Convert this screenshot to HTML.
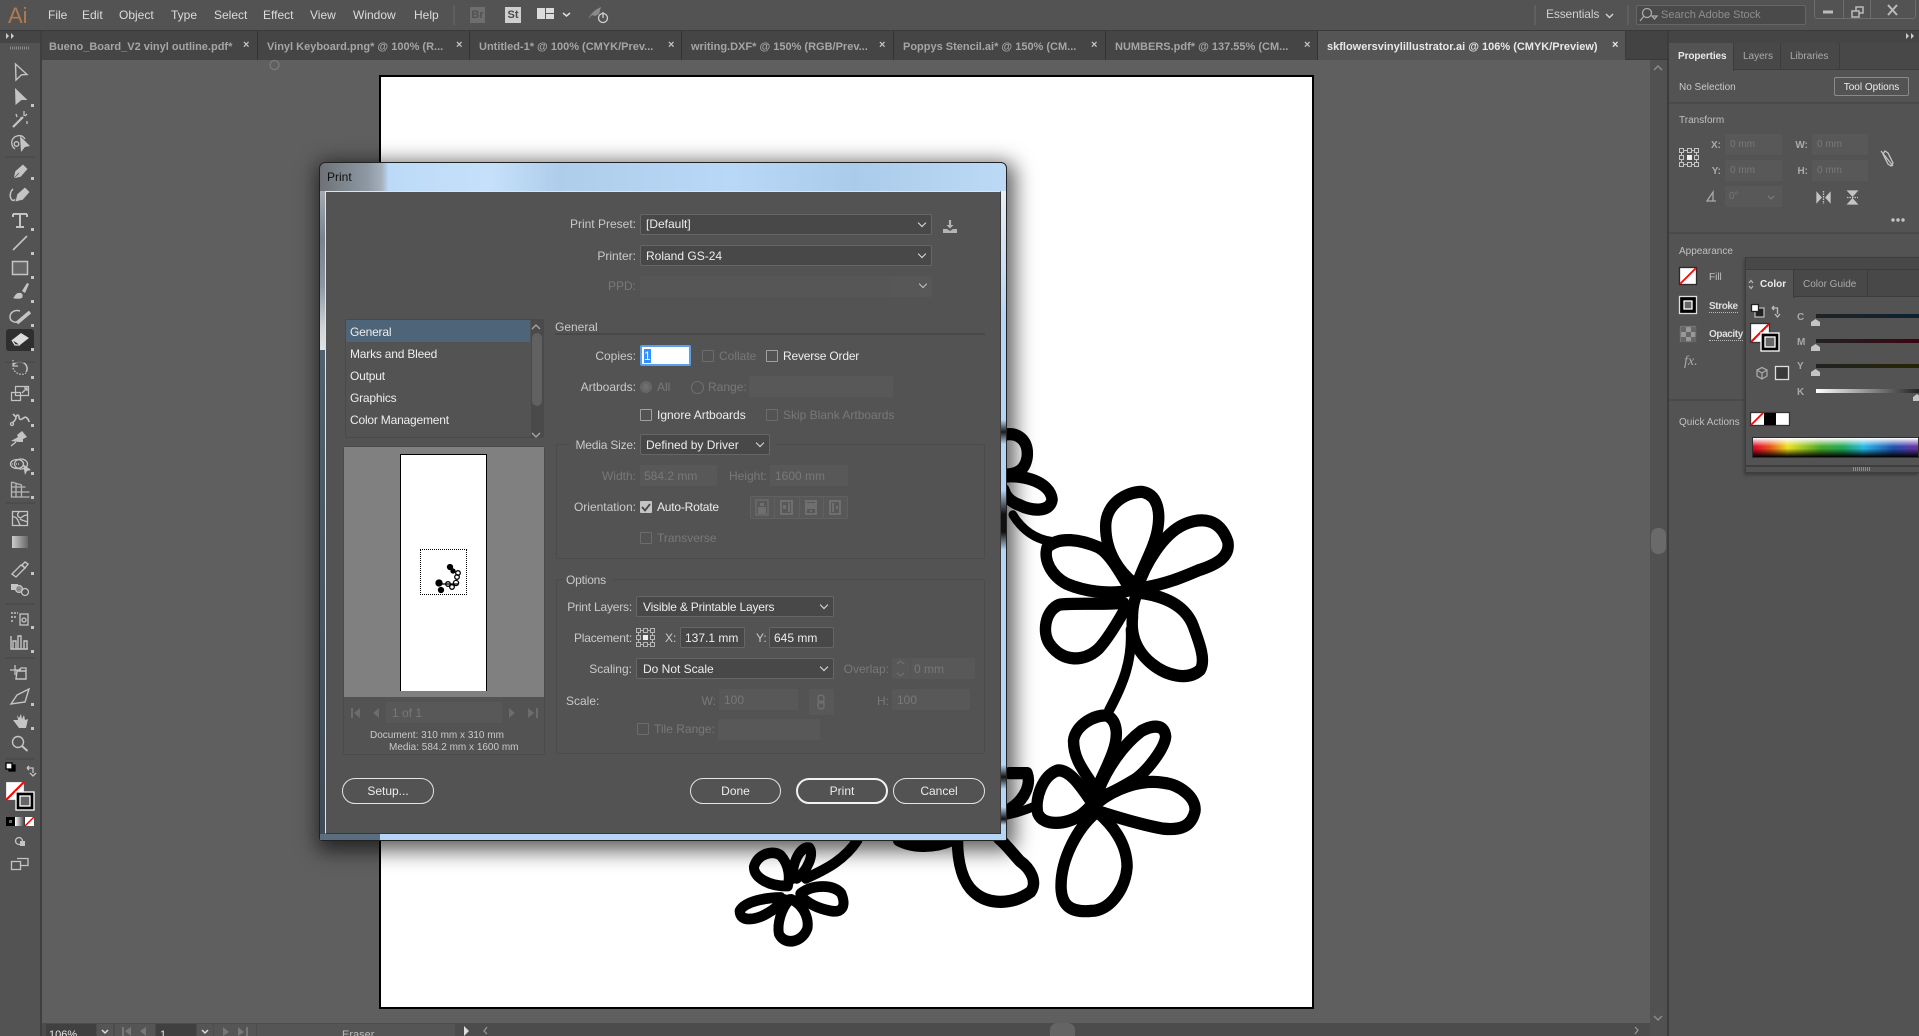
<!DOCTYPE html>
<html><head><meta charset="utf-8"><title>Print</title>
<style>
html,body{margin:0;padding:0;width:1919px;height:1036px;overflow:hidden;background:#5f5f5f}
*{box-sizing:border-box}
body{font:12px/14px "Liberation Sans",sans-serif;color:#c9c9c9;position:relative}
div,span.t,svg{position:absolute}
.t{position:absolute;white-space:nowrap;line-height:14px;font-size:12px}
.r{transform:translateX(-100%)}
.w{color:#ededed}
.d{color:#787878}
.n{letter-spacing:-.2px}
.b{background:#484848;border:1px solid #666;border-radius:2px}
.x{background:#585858;border-radius:1px}
.c{border:1px solid #a0a0a0;border-radius:1px;width:12px;height:12px}
.cd{border:1px solid #6c6c6c;border-radius:1px;width:12px;height:12px}
.chev:after{content:"";position:absolute;right:6px;top:5px;width:5px;height:5px;border-right:1.6px solid #e0e0e0;border-bottom:1.6px solid #e0e0e0;transform:rotate(45deg)}
.btn{position:absolute;border:1px solid #e4e4e4;border-radius:13px;height:26px;color:#ececec;text-align:center;line-height:25px;font-size:12px}
.tab{position:absolute;top:31px;height:29px;background:#454545;border-right:1px solid #333}
.tt{position:absolute;top:39px;white-space:nowrap;font:bold 11px/14px "Liberation Sans",sans-serif;color:#a5a5a5}
.tx{position:absolute;top:38px;font:bold 11px/14px "Liberation Sans",sans-serif;color:#c4c4c4}
.m{position:absolute;top:8px;color:#dcdcdc;font-size:12px;line-height:14px;white-space:nowrap}
.line{background:#454545}
</style></head><body>

<!-- menu bar -->
<div style="left:0;top:0;width:1919px;height:31px;background:#535353;border-bottom:1px solid #3a3a3a"></div>
<span class="t" style="left:8px;top:3px;font-size:22px;line-height:26px;color:#b07a50">Ai</span>
<span class="m" style="left:48px">File</span><span class="m" style="left:82px">Edit</span><span class="m" style="left:119px">Object</span><span class="m" style="left:171px">Type</span><span class="m" style="left:214px">Select</span><span class="m" style="left:263px">Effect</span><span class="m" style="left:310px">View</span><span class="m" style="left:353px">Window</span><span class="m" style="left:414px">Help</span>
<div style="left:453px;top:5px;width:2px;height:20px;background:#5f5f5f"></div>
<div style="left:470px;top:7px;width:15px;height:16px;background:#6e6e6e;color:#525252;font:bold 11px/16px 'Liberation Sans';text-align:center">Br</div>
<div style="left:505px;top:7px;width:16px;height:16px;background:#cfcfcf;color:#4a4a4a;font:bold 11px/16px 'Liberation Sans';text-align:center">St</div>
<div style="left:1534px;top:5px;width:2px;height:20px;background:#5f5f5f"></div>
<span class="t" style="left:1546px;top:7px;color:#d0d0d0;font-size:12px;letter-spacing:-.15px">Essentials</span>
<div style="left:1627px;top:5px;width:2px;height:20px;background:#5f5f5f"></div>
<div style="left:1636px;top:5px;width:170px;height:20px;background:#4a4a4a;border:1px solid #666;border-radius:2px"></div>
<span class="t" style="left:1661px;top:8px;color:#8e8e8e;font-size:11px">Search Adobe Stock</span>
<div style="left:1814px;top:-2px;width:102px;height:21px;border:1px solid #6d6d6d;border-radius:3px"></div>
<div style="left:1843px;top:0;width:1px;height:18px;background:#6d6d6d"></div>
<div style="left:1870px;top:0;width:1px;height:18px;background:#6d6d6d"></div>

<!-- tabs -->
<div style="left:0;top:31px;width:1669px;height:29px;background:#434343;border-bottom:1px solid #393939"></div>
<div class="tab" style="left:42px;width:216px"></div>
<div class="tab" style="left:258px;width:212px"></div>
<div class="tab" style="left:470px;width:212px"></div>
<div class="tab" style="left:682px;width:212px"></div>
<div class="tab" style="left:894px;width:212px"></div>
<div class="tab" style="left:1106px;width:212px"></div>
<div class="tab" style="left:1318px;width:308px;background:#555;border-right:1px solid #3c3c3c"></div>
<span class="tt" style="left:49px;top:40px">Bueno_Board_V2 vinyl outline.pdf*</span><span class="tx" style="left:243px">×</span>
<span class="tt" style="left:267px;top:40px">Vinyl Keyboard.png* @ 100% (R...</span><span class="tx" style="left:456px">×</span>
<span class="tt" style="left:479px;top:40px">Untitled-1* @ 100% (CMYK/Prev...</span><span class="tx" style="left:668px">×</span>
<span class="tt" style="left:691px;top:40px">writing.DXF* @ 150% (RGB/Prev...</span><span class="tx" style="left:879px">×</span>
<span class="tt" style="left:903px;top:40px">Poppys Stencil.ai* @ 150% (CM...</span><span class="tx" style="left:1091px">×</span>
<span class="tt" style="left:1115px;top:40px">NUMBERS.pdf* @ 137.55% (CM...</span><span class="tx" style="left:1304px">×</span>
<span class="tt" style="left:1327px;top:40px;color:#e8e8e8">skflowersvinylillustrator.ai @ 106% (CMYK/Preview)</span><span class="tx" style="left:1612px;color:#e8e8e8">×</span>

<!-- toolbar -->
<div style="left:0;top:31px;width:40px;height:1005px;background:#535353"></div>
<div style="left:40px;top:31px;width:2px;height:1005px;background:#3f3f3f"></div>
<div style="left:0;top:31px;width:40px;height:12px;background:#454545"></div>

<!-- canvas artboard -->
<div style="left:380px;top:76px;width:933px;height:932px;background:#fff;border:1px solid #000;outline:.5px solid #000"></div>

<!-- artwork -->
<svg style="left:0;top:0" width="1919" height="1036" viewBox="0 0 1919 1036">
<g transform="matrix(.3571 0 0 .3827 720 400)" fill="none" stroke="#000" stroke-linejoin="round" stroke-linecap="round">
<g stroke-width="32">
<path d="M1160 480C1120 450 1080 400 1080 330C1080 270 1140 240 1180 240C1225 245 1235 290 1225 340C1215 390 1180 440 1165 490"/>
<path d="M1170 490C1190 430 1240 350 1300 325C1350 305 1400 310 1422 370C1430 410 1390 430 1340 445C1290 465 1250 480 1190 490"/>
<path d="M1150 497C1090 510 1020 500 970 480C930 460 905 420 916 385C950 355 1010 365 1060 385C1090 400 1120 450 1150 497"/>
<path d="M1130 530C1060 535 980 530 950 535C910 550 900 610 925 640C960 685 1020 685 1060 650C1090 620 1120 570 1135 545"/>
<path d="M1170 503C1230 510 1300 530 1325 590C1345 640 1360 680 1345 705C1310 735 1250 720 1210 690C1170 660 1150 620 1155 570C1155 540 1160 520 1170 503"/>
<path d="M1150 600C1155 680 1130 740 1090 810" stroke-width="28"/>
<path d="M820 300C850 345 890 365 930 370" stroke-width="24"/>
<path d="M800 90C840 85 865 110 860 150C855 180 835 195 800 195"/>
<path d="M800 200C850 195 925 215 930 260C925 295 870 290 840 275C810 265 800 250 795 235"/>
<path d="M1050 1015C1020 970 990 940 990 890C995 850 1050 820 1085 825C1115 840 1115 880 1100 920C1085 960 1060 1000 1050 1030"/>
<path d="M1060 1020C1085 960 1130 900 1180 865C1210 850 1245 845 1248 880C1245 910 1200 965 1165 990C1130 1010 1090 1030 1060 1040"/>
<path d="M1060 1050C1100 1020 1170 990 1240 1000C1290 1005 1335 1040 1330 1075C1320 1115 1290 1125 1240 1120C1180 1110 1110 1090 1060 1075"/>
<path d="M1040 1050C1010 1010 980 965 945 968C905 980 880 1040 890 1080C905 1115 970 1110 1010 1085C1030 1070 1040 1060 1045 1050"/>
<path d="M1055 1075C1100 1110 1140 1160 1140 1220C1135 1280 1090 1335 1040 1335C980 1340 955 1320 955 1270C955 1200 1000 1120 1050 1080"/>
<path d="M810 975L860 975C870 1000 860 1040 810 1070"/>
<path d="M800 1085C830 1080 860 1070 885 1060" stroke-width="24"/>
<path d="M665 1150C665 1210 680 1260 710 1285C750 1320 820 1320 870 1285C890 1260 870 1225 840 1205C820 1185 800 1160 780 1145"/>
<path d="M500 1150C540 1170 600 1170 650 1150"/>
</g>
<g stroke-width="28">
<path d="M205 1250C200 1210 225 1165 250 1170C265 1185 245 1230 215 1250"/>
<path d="M185 1270C140 1270 95 1250 95 1220C105 1185 150 1175 170 1190C195 1215 195 1250 190 1270"/>
<path d="M225 1290C260 1265 320 1265 340 1290C355 1325 340 1340 310 1335C280 1330 250 1320 225 1295"/>
<path d="M170 1300C130 1300 70 1310 55 1335C55 1365 100 1360 135 1340C155 1330 170 1315 180 1305"/>
<path d="M195 1305C170 1330 160 1370 165 1395C180 1425 230 1420 245 1380C250 1345 225 1315 200 1305"/>
<path d="M240 1250C300 1225 350 1200 385 1150"/>
</g>
</g>
</svg>

<!-- vertical scrollbar + status -->
<div style="left:1650px;top:60px;width:17px;height:976px;background:#515151"></div>
<div style="left:1651px;top:528px;width:15px;height:26px;background:#6a6a6a;border-radius:7px"></div>
<div style="left:1667px;top:31px;width:2px;height:1005px;background:#3c3c3c"></div>
<div style="left:42px;top:1023px;width:1608px;height:13px;background:#4c4c4c"></div>
<div style="left:1050px;top:1023px;width:25px;height:13px;background:#646464;border-radius:7px 7px 0 0"></div>
<div style="left:46px;top:1024px;width:50px;height:12px;background:#404040"></div>
<div style="left:97px;top:1024px;width:16px;height:12px;background:#555"></div>
<div style="left:115px;top:1024px;width:40px;height:12px;background:#555"></div>
<div style="left:156px;top:1024px;width:40px;height:12px;background:#404040"></div>
<div style="left:197px;top:1024px;width:16px;height:12px;background:#555"></div>
<div style="left:214px;top:1024px;width:42px;height:12px;background:#555"></div>
<div style="left:257px;top:1024px;width:198px;height:12px;background:#555"></div>
<span class="t" style="left:49px;top:1028px;font-size:11px;color:#e4e4e4">106%</span>
<span class="t" style="left:160px;top:1028px;font-size:11px;color:#e4e4e4">1</span>
<span class="t" style="left:342px;top:1028px;font-size:11px;color:#bbb">Eraser</span>

<!-- right panel -->
<div style="left:1669px;top:31px;width:250px;height:1005px;background:#535353"></div>
<div style="left:1669px;top:31px;width:250px;height:12px;background:#454545"></div>
<div style="left:1669px;top:43px;width:250px;height:27px;background:#484848;border-bottom:1px solid #3c3c3c"></div>
<div style="left:1669px;top:43px;width:65px;height:28px;background:#535353;border-right:1px solid #3c3c3c"></div>
<div style="left:1780px;top:43px;width:1px;height:27px;background:#3c3c3c"></div>
<div style="left:1839px;top:43px;width:1px;height:27px;background:#3c3c3c"></div>
<span class="t" style="left:1678px;top:50px;font:bold 10px/14px 'Liberation Sans';color:#eaeaea;letter-spacing:-.1px">Properties</span>
<span class="t" style="left:1743px;top:50px;font-size:10px;color:#aaa">Layers</span>
<span class="t" style="left:1790px;top:50px;font-size:10px;color:#aaa">Libraries</span>
<span class="t" style="left:1679px;top:81px;font-size:10px;color:#c8c8c8">No Selection</span>
<div style="left:1834px;top:77px;width:75px;height:19px;border:1px solid #8b8b8b;border-radius:2px;color:#eee;font-size:10px;line-height:19px;text-align:center">Tool Options</div>
<div class="line" style="left:1669px;top:102px;width:250px;height:2px;background:#4a4a4a"></div>
<span class="t" style="left:1679px;top:114px;font-size:10px;color:#c0c0c0">Transform</span>
<div class="x" style="left:1725px;top:134px;width:57px;height:21px"></div><div class="x" style="left:1725px;top:160px;width:57px;height:21px"></div><div class="x" style="left:1725px;top:186px;width:57px;height:21px"></div>
<div class="x" style="left:1812px;top:134px;width:56px;height:21px"></div><div class="x" style="left:1812px;top:160px;width:56px;height:21px"></div>
<span class="t r" style="left:1721px;top:139px;font-size:10px;font-weight:bold;color:#aaa">X:</span><span class="t r" style="left:1721px;top:165px;font-size:10px;font-weight:bold;color:#aaa">Y:</span>
<span class="t r" style="left:1808px;top:139px;font-size:10px;font-weight:bold;color:#aaa">W:</span><span class="t r" style="left:1808px;top:165px;font-size:10px;font-weight:bold;color:#aaa">H:</span>
<span class="t d" style="left:1730px;top:138px;font-size:10px">0 mm</span><span class="t d" style="left:1730px;top:164px;font-size:10px">0 mm</span>
<span class="t d" style="left:1817px;top:138px;font-size:10px">0 mm</span><span class="t d" style="left:1817px;top:164px;font-size:10px">0 mm</span>
<span class="t d" style="left:1729px;top:190px;font-size:10px">0°</span>
<div style="left:1669px;top:232px;width:250px;height:2px;background:#4a4a4a"></div>
<span class="t" style="left:1679px;top:245px;font-size:10px;color:#c0c0c0">Appearance</span>
<span class="t" style="left:1709px;top:271px;font-size:10px;color:#c0c0c0">Fill</span>
<span class="t" style="left:1709px;top:301px;font-size:10px;color:#dedede;border-bottom:1px dotted #bbb;line-height:11px;font-weight:bold;letter-spacing:-.4px">Stroke</span>
<span class="t" style="left:1709px;top:329px;font-size:10px;color:#dedede;border-bottom:1px dotted #bbb;line-height:11px;font-weight:bold;letter-spacing:-.4px">Opacity</span>
<span class="t" style="left:1684px;top:355px;font:italic 14px/14px 'Liberation Serif';color:#aaa">fx.</span>
<div style="left:1669px;top:399px;width:76px;height:2px;background:#4a4a4a"></div>
<span class="t" style="left:1679px;top:416px;font-size:10px;color:#c0c0c0">Quick Actions</span>

<!-- floating colour panel -->
<div style="left:1745px;top:257px;width:174px;height:216px;background:#535353;border:1px solid #3e3e3e;border-right:0;box-shadow:-1px 2px 3px rgba(0,0,0,.3)"></div>
<div style="left:1746px;top:258px;width:173px;height:12px;background:#484848;border-bottom:1px solid #3c3c3c"></div>
<div style="left:1746px;top:270px;width:173px;height:27px;background:#484848;border-bottom:1px solid #3c3c3c"></div>
<div style="left:1746px;top:270px;width:48px;height:28px;background:#535353;border-right:1px solid #3c3c3c"></div>
<div style="left:1867px;top:270px;width:1px;height:27px;background:#3c3c3c"></div>
<span class="t" style="left:1760px;top:278px;font:bold 10px/14px 'Liberation Sans';color:#eaeaea">Color</span>
<span class="t" style="left:1803px;top:278px;font-size:10px;color:#aaa">Color Guide</span>
<span class="t" style="left:1797px;top:311px;font:bold 10px/14px 'Liberation Sans';color:#a8a8a8">C</span>
<span class="t" style="left:1797px;top:336px;font:bold 10px/14px 'Liberation Sans';color:#a8a8a8">M</span>
<span class="t" style="left:1797px;top:360px;font:bold 10px/14px 'Liberation Sans';color:#a8a8a8">Y</span>
<span class="t" style="left:1797px;top:386px;font:bold 10px/14px 'Liberation Sans';color:#a8a8a8">K</span>
<div style="left:1816px;top:314px;width:103px;height:4px;background:linear-gradient(90deg,#222,#0a2233)"></div>
<div style="left:1816px;top:339px;width:103px;height:4px;background:linear-gradient(90deg,#222,#3a0612)"></div>
<div style="left:1816px;top:364px;width:103px;height:4px;background:linear-gradient(90deg,#222,#252505)"></div>
<div style="left:1816px;top:389px;width:103px;height:4px;background:linear-gradient(90deg,#fff,#222)"></div>
<div style="left:1752px;top:437px;width:167px;height:21px;border:1px solid #2e2e2e;background:linear-gradient(#fff 0,rgba(255,255,255,0) 45%,rgba(0,0,0,0) 55%,#000 100%),linear-gradient(90deg,#e0002a 0,#e8501a 10%,#ece020 21%,#4aa82a 41%,#20a858 55%,#28b8e8 67%,#2050b0 85%,#7030a0 100%)"></div>
<div style="left:1746px;top:465px;width:173px;height:2px;background:#3e3e3e"></div>

<!-- dialog -->
<div style="left:319px;top:162px;width:688px;height:679px;border-radius:6px 6px 3px 3px;border:1px solid #222;box-shadow:3px 5px 20px 5px rgba(0,0,0,.62);background:linear-gradient(90deg,#6e7278 0,#8d99a4 7%,#a5b0bb 9%,#bcdaf7 10%,#c6e0fa 25%,#aecdeb 35%,#b9d8f7 60%,#aacbea 78%,#bcdaf6 100%)"></div>
<div style="left:320px;top:350px;width:5px;height:490px;background:linear-gradient(#50626f,#3e4c58)"></div>
<div style="left:320px;top:191px;width:5px;height:159px;background:linear-gradient(#a4acb2 0,#76838e 30%,#8b98a3 60%,#cdd2d6 85%,#dfe3e6 100%)"></div>
<div style="left:320px;top:834px;width:60px;height:6px;background:#5a6e80"></div>
<div style="left:380px;top:834px;width:626px;height:6px;background:#b5d5f4"></div>
<div style="left:1001px;top:191px;width:5px;height:649px;background:linear-gradient(#e8eef4,#b5d5f4 20%,#b5d5f4 100%)"></div>
<div style="left:1001px;top:420px;width:5px;height:24px;background:linear-gradient(#b5d5f4,#1a1a1a,#b5d5f4)"></div>
<div style="left:1001px;top:490px;width:5px;height:60px;background:linear-gradient(#b5d5f4,#111 40%,#111 70%,#b5d5f4)"></div>
<div style="left:1001px;top:765px;width:5px;height:60px;background:linear-gradient(#b5d5f4,#111 20%,#b5d5f4 40%,#b5d5f4 70%,#111 90%,#b5d5f4)"></div>
<span class="t" style="left:327px;top:170px;color:#111">Print</span>
<div style="left:325px;top:191px;width:676px;height:643px;background:#535353;border:1px solid #d8e6f2;border-right:1px solid #3a3a3a;border-bottom:1px solid #2f3a44"></div>

<span class="t r" style="left:636px;top:217px">Print Preset:</span>
<div class="b chev" style="left:640px;top:214px;width:292px;height:21px"></div><span class="t w" style="left:646px;top:217px">[Default]</span>
<span class="t r" style="left:636px;top:249px">Printer:</span>
<div class="b chev" style="left:640px;top:245px;width:292px;height:21px"></div><span class="t w" style="left:646px;top:249px">Roland GS-24</span>
<span class="t r d" style="left:636px;top:279px">PPD:</span>
<div class="x chev" style="left:640px;top:276px;width:292px;height:21px;opacity:.8"></div>

<!-- list -->
<div style="left:345px;top:319px;width:199px;height:119px;border:1px solid #4a4a4a;border-radius:2px;overflow:hidden;background:#535353">
<div style="left:0;top:0;width:184px;height:22px;background:#4e6479"></div>
<span class="t w n" style="left:4px;top:5px">General</span>
<span class="t w n" style="left:4px;top:27px">Marks and Bleed</span>
<span class="t w n" style="left:4px;top:49px">Output</span>
<span class="t w n" style="left:4px;top:71px">Graphics</span>
<span class="t w n" style="left:4px;top:93px">Color Management</span>
<span class="t w n" style="left:4px;top:115px">Advanced</span>
<div style="left:185px;top:0;width:13px;height:117px;background:#4a4a4a"></div>
<div style="left:186px;top:13px;width:10px;height:73px;background:#616161;border-radius:5px"></div>
</div>
<span class="t" style="left:555px;top:320px">General</span>
<div style="left:555px;top:333px;width:430px;height:2px;background:#484848"></div>

<span class="t r" style="left:636px;top:349px">Copies:</span>
<div style="left:640px;top:345px;width:51px;height:21px;background:#fff;border:2px solid #5a9fe8;border-radius:2px"></div>
<div style="left:644px;top:349px;width:7px;height:14px;background:#3390ff"></div><span class="t" style="left:644px;top:349px;color:#fff">1</span>
<div class="cd" style="left:702px;top:350px"></div><span class="t d" style="left:719px;top:349px">Collate</span>
<div class="c" style="left:766px;top:350px"></div><span class="t w n" style="left:783px;top:349px">Reverse Order</span>

<span class="t r" style="left:636px;top:380px">Artboards:</span>
<div style="left:640px;top:381px;width:12px;height:12px;border-radius:6px;background:#6f6f6f;border:3px solid #666"></div><span class="t d" style="left:657px;top:380px">All</span>
<div style="left:691px;top:381px;width:13px;height:13px;border-radius:7px;border:1px solid #707070"></div><span class="t d" style="left:708px;top:380px">Range:</span>
<div class="x" style="left:749px;top:376px;width:144px;height:21px"></div>
<div class="c" style="left:640px;top:409px"></div><span class="t w" style="left:657px;top:408px">Ignore Artboards</span>
<div class="cd" style="left:766px;top:409px"></div><span class="t d" style="left:783px;top:408px">Skip Blank Artboards</span>

<div style="left:556px;top:444px;width:429px;height:115px;border:1px solid #4b4b4b;border-radius:2px"></div>
<div style="left:570px;top:436px;width:205px;height:18px;background:#535353"></div>
<span class="t r n" style="left:636px;top:438px">Media Size:</span>
<div class="b chev" style="left:640px;top:434px;width:130px;height:21px"></div><span class="t w" style="left:646px;top:438px">Defined by Driver</span>
<span class="t r d" style="left:636px;top:469px">Width:</span>
<div class="x" style="left:640px;top:465px;width:77px;height:21px"></div><span class="t d" style="left:644px;top:469px">584.2 mm</span>
<span class="t r d" style="left:767px;top:469px">Height:</span>
<div class="x" style="left:770px;top:465px;width:78px;height:21px"></div><span class="t d" style="left:775px;top:469px">1600 mm</span>
<span class="t r" style="left:636px;top:500px">Orientation:</span>
<div style="left:640px;top:501px;width:12px;height:12px;background:#c4c4c4;border-radius:1px"></div>
<span class="t w n" style="left:657px;top:500px">Auto-Rotate</span>
<div style="left:750px;top:496px;width:98px;height:23px;border:1px solid #606060;border-radius:1px;background:#585858"></div>
<div style="left:774px;top:497px;width:1px;height:21px;background:#606060"></div><div style="left:799px;top:497px;width:1px;height:21px;background:#606060"></div><div style="left:823px;top:497px;width:1px;height:21px;background:#606060"></div>
<div class="cd" style="left:640px;top:532px"></div><span class="t d" style="left:657px;top:531px">Transverse</span>

<div style="left:556px;top:579px;width:429px;height:175px;border:1px solid #4b4b4b;border-radius:2px"></div>
<div style="left:563px;top:572px;width:50px;height:16px;background:#535353"></div>
<span class="t n" style="left:566px;top:573px">Options</span>
<span class="t r n" style="left:632px;top:600px">Print Layers:</span>
<div class="b chev" style="left:636px;top:596px;width:198px;height:21px"></div><span class="t w n" style="left:643px;top:600px">Visible &amp; Printable Layers</span>
<span class="t r n" style="left:632px;top:631px">Placement:</span>
<span class="t" style="left:665px;top:631px">X:</span>
<div class="b" style="left:680px;top:627px;width:65px;height:21px"></div><span class="t w" style="left:685px;top:631px">137.1 mm</span>
<span class="t" style="left:756px;top:631px">Y:</span>
<div class="b" style="left:769px;top:627px;width:65px;height:21px"></div><span class="t w" style="left:774px;top:631px">645 mm</span>
<span class="t r" style="left:632px;top:662px">Scaling:</span>
<div class="b chev" style="left:636px;top:658px;width:198px;height:21px"></div><span class="t w" style="left:643px;top:662px">Do Not Scale</span>
<span class="t r d" style="left:889px;top:662px">Overlap:</span>
<div class="x" style="left:892px;top:658px;width:83px;height:21px"></div><div style="left:910px;top:658px;width:1px;height:21px;background:#535353"></div>
<span class="t d" style="left:914px;top:662px">0 mm</span>
<span class="t" style="left:566px;top:694px">Scale:</span>
<span class="t r d" style="left:716px;top:694px">W:</span>
<div class="x" style="left:719px;top:689px;width:79px;height:21px"></div><span class="t d" style="left:724px;top:693px">100</span>
<div class="x" style="left:809px;top:689px;width:25px;height:26px"></div>
<span class="t r d" style="left:889px;top:694px">H:</span>
<div class="x" style="left:892px;top:689px;width:78px;height:21px"></div><span class="t d" style="left:897px;top:693px">100</span>
<div class="cd" style="left:637px;top:723px"></div><span class="t d" style="left:654px;top:722px">Tile Range:</span>
<div class="x" style="left:718px;top:719px;width:102px;height:21px"></div>

<!-- preview -->
<div style="left:343px;top:446px;width:202px;height:309px;border:1px solid #4b4b4b;border-radius:2px"></div>
<div style="left:344px;top:447px;width:200px;height:250px;background:#808080"></div>
<div style="left:400px;top:454px;width:87px;height:237px;background:#fff;border:1px solid #000;border-bottom:0"></div>
<div style="left:420px;top:549px;width:47px;height:46px;border:1px dotted #000"></div>
<div class="x" style="left:386px;top:702px;width:116px;height:21px"></div><span class="t d" style="left:392px;top:706px">1 of 1</span>
<span class="t" style="left:370px;top:729px;font-size:10px">Document: 310 mm x 310 mm</span>
<span class="t" style="left:389px;top:741px;font-size:10px">Media: 584.2 mm x 1600 mm</span>

<div class="btn" style="left:342px;top:778px;width:92px">Setup...</div>
<div class="btn" style="left:690px;top:778px;width:91px">Done</div>
<div class="btn" style="left:796px;top:778px;width:92px;border-width:2px;border-color:#f2f2f2;line-height:23px">Print</div>
<div class="btn" style="left:893px;top:778px;width:92px">Cancel</div>

<!-- icon overlay -->
<svg style="left:0;top:0" width="1919" height="1036" viewBox="0 0 1919 1036" fill="none" stroke="#bdbdbd" stroke-width="1.3">
<!-- top bar -->
<g fill="#dcdcdc" stroke="none"><path d="M537 8h8v11h-8zM546 8h8v5h-8zM546 14h8v5h-8z"/></g>
<path d="M563 13l3.500 3 3.500-3" stroke="#dcdcdc" stroke-width="1.500"/>
<path d="M588 19c3-6 8-10 13-12l-2 7-4 2-3-1z" fill="#8a8a8a" stroke="none"/><circle cx="603" cy="18" r="4.500" stroke="#cfcfcf"/><path d="M603 12v6" stroke="#cfcfcf"/>
<path d="M1606 14l3.500 3.500 3.500-3.500" stroke="#d0d0d0" stroke-width="1.500"/>
<circle cx="1647" cy="13" r="4.500" stroke="#aaa"/><path d="M1644 16l-4 5M1652 16h5l-2.500 3z" stroke="#aaa"/>
<path d="M1823 12h10" stroke="#bbb" stroke-width="3"/>
<path d="M1852 11h7v6h-7zM1856 11V7h7v6h-4" stroke="#bbb" stroke-width="1.500"/>
<path d="M1888 5l9 10M1897 5l-9 10" stroke="#bbb" stroke-width="2"/>
<!-- collapse -->
<path d="M6 33l3 3-3 3zM11 33l3 3-3 3z" fill="#ccc" stroke="none"/><path d="M1906 33l3 3-3 3zM1911 33l3 3-3 3z" fill="#ccc" stroke="none"/>
<path d="M10 48h19" stroke="#8a8a8a" stroke-width="3" stroke-dasharray="1 1"/>
<circle cx="274.500" cy="65" r="4.500" stroke="#7a7a7a"/>
<!-- tools -->
<path d="M15.500 64L27 74.500 21.500 74.800 16 80z" stroke="#c4c4c4" stroke-width="1.400"/>
<path d="M15 88L27.500 100 21.500 100 15.500 105z" fill="#c4c4c4" stroke="none"/>
<path d="M13 127l10-10" stroke="#c4c4c4" stroke-width="2.200"/><path d="M16 114l1 3M24 111v5M20 118h2M27 114l-2 2M27 121v3" stroke="#c4c4c4"/>
<path d="M25 139c-2-3-5-4-8-3-4 1-6 5-5 8 0 3 2 4 3 5" stroke="#c4c4c4" stroke-width="1.300"/><circle cx="16.500" cy="144" r="2.300" stroke="#c4c4c4"/><path d="M20 136l10 10-5 1-4 5z" fill="#c4c4c4" stroke="none"/>
<path d="M13 179l2-8 8-7 5 5-7 8zM13 179l6-6" fill="#c4c4c4" stroke="#535353" stroke-width=".8"/>
<path d="M13 189c-4 4-3 9-1 11 1 1 3 0 4-1" stroke="#c4c4c4" stroke-width="1.500"/><path d="M15 202l2-8 8-7 5 5-7 8z" fill="#c4c4c4" stroke="#535353" stroke-width=".8"/>
<path d="M13 214h14M20 214v13M16 227h8M13 214v3M27 214v3" stroke="#c4c4c4" stroke-width="2"/>
<path d="M13 250l14-14" stroke="#c4c4c4" stroke-width="1.600"/>
<rect x="12.500" y="261.500" width="15" height="13" stroke="#c4c4c4" stroke-width="1.500" fill="#666"/>
<path d="M22 291l5-8 2 1-4 9zM13 298c2-1 2-6 8-5 2 1 2 3 1 5-3 1-6 1-9 0z" fill="#c4c4c4" stroke="none"/>
<path d="M20 311c-6-2-10 2-10 6 0 4 4 6 9 5" stroke="#c4c4c4" stroke-width="1.500"/><path d="M17 323l13-11" stroke="#c4c4c4" stroke-width="3.500"/>
<rect x="6" y="329" width="28" height="22" rx="3" fill="#2f2f2f" stroke="none"/>
<path d="M12 340l9-7 8 5-9 7z" fill="#dcdcdc" stroke="none"/><path d="M12 340l3 5h5" stroke="#dcdcdc"/>
<path d="M13 365c3-4 11-4 13 0 2 3 1 6 0 7" stroke="#c4c4c4" stroke-width="1.500"/><path d="M13 360v6h5" stroke="#c4c4c4" stroke-width="1.200"/><path d="M13 368c2 6 9 8 13 5" stroke="#c4c4c4" stroke-dasharray="1.500 1.500"/>
<path d="M11.500 392.500h9v8h-9zM15.500 386.500h13v9h-13z" stroke="#c4c4c4" stroke-width="1.200"/><path d="M22 393l5-5M24 388h3v3" stroke="#c4c4c4"/>
<path d="M12 423c3-2 4-4 4-6 1-3 3-2 3 0 0 2 1 3 3 2 2-1 3-3 5-1 1 1 2 3 2 4M16 417l-3-3" stroke="#c4c4c4" stroke-width="1.600"/><circle cx="12" cy="424" r="1.500" stroke="#c4c4c4"/>
<path d="M11 441l7-4-1-2 5-4 5 6-4 2 0 3-4 0z" fill="#c4c4c4" stroke="none"/><path d="M16 442l-5 4" stroke="#c4c4c4" stroke-width="1.300"/>
<ellipse cx="17" cy="464" rx="6.500" ry="4.500" stroke="#c4c4c4"/><ellipse cx="21" cy="464" rx="6.500" ry="5" stroke="#c4c4c4"/><path d="M12 464h7" stroke="#c4c4c4" stroke-dasharray="1 1"/><path d="M23 464l8 6-4 1-2 4z" fill="#c4c4c4" stroke="none"/>
<path d="M11.500 482v15h18M11.500 482l10 3v12M11.500 487h14M11.500 492h18M16 484v13" stroke="#b5b5b5"/>
<path d="M12.500 511.500h15v14h-15zM13 517c4-1 5 4 7 8M20 518c2 0 3-3 7-3M20 519c2 2 4 1 7 3M19 512c-2 2-2 4 1 6" stroke="#c4c4c4"/>
<defs><linearGradient id="g1"><stop offset="0" stop-color="#ccc"/><stop offset="1" stop-color="#666"/></linearGradient><linearGradient id="g2"><stop offset="0" stop-color="#fff"/><stop offset="1" stop-color="#333"/></linearGradient></defs>
<rect x="12" y="536" width="16" height="12" fill="url(#g1)" stroke="none"/>
<path d="M12 574l9-9 4 3-9 9z M25 562l3 2-3 4-3-3z" stroke="#c4c4c4" stroke-width="1.400"/>
<rect x="11" y="584" width="7" height="6" fill="#c4c4c4" stroke="none"/><circle cx="19" cy="589" r="3.500" fill="#888" stroke="#c4c4c4"/><circle cx="25" cy="592" r="3.500" stroke="#c4c4c4"/>
<path d="M11 613h2M14 613h2M17 613h1M11 617h2M14 617h2M11 621h2" stroke="#c4c4c4" stroke-width="1.500"/><rect x="20" y="614" width="8" height="11" stroke="#c4c4c4"/><circle cx="24" cy="620" r="2" stroke="#c4c4c4"/>
<path d="M11 636v13h17M13 649v-8h3v8M18 649v-13h3v13M24 649v-8h3v8" stroke="#c4c4c4" stroke-width="1.400"/>
<path d="M15 665v10M10 670h11" stroke="#c4c4c4"/><path d="M17 671h9v8H16z" stroke="#c4c4c4" stroke-width="1.400"/><path d="M18 671l3-3h5v3" stroke="#c4c4c4"/>
<path d="M11 704l6-9 12-6-4 13z" stroke="#c4c4c4" stroke-width="1.400"/>
<path d="M13 720l6 8h7l2-9-3 1-1-5-2 4-1-5-2 4-2-3 1 5z" fill="#c4c4c4" stroke="none"/>
<circle cx="18" cy="742" r="5.500" stroke="#c4c4c4" stroke-width="1.400"/><path d="M22 746l5.500 5" stroke="#c4c4c4" stroke-width="2"/>
<g fill="#c4c4c4" stroke="none"><path id="c" d="M31 104h3v3h-3z M31 177h3v3h-3z M31 228h3v3h-3zM31 252h3v3h-3zM31 276h3v3h-3zM31 300h3v3h-3zM31 324h3v3h-3zM31 348h3v3h-3zM31 376h3v3h-3zM31 399h3v3h-3zM31 424h3v3h-3zM31 448h3v3h-3zM31 472h3v3h-3zM31 496h3v3h-3zM31 572h3v3h-3zM31 626h3v3h-3zM31 650h3v3h-3zM31 703h3v3h-3zM31 727h3v3h-3z"/></g>
<path d="M5 157h30M5 362h30M5 503h30M5 604h30M5 658h30M5 759h30" stroke="#494949"/>
<!-- fill & stroke toolbar -->
<rect x="9" y="765" width="6" height="6" fill="#000" stroke="#000"/><rect x="6" y="763" width="6" height="6" fill="#fff" stroke="#000"/>
<path d="M27 768h6v5M30 773l3 3 3-3M27 768l2-2M27 768l2 2" stroke="#c4c4c4"/>
<rect x="5.500" y="781.500" width="19" height="19" fill="#fff" stroke="#555"/><path d="M6 800L24 782" stroke="#f00" stroke-width="2"/>
<rect x="16" y="792" width="18" height="18" fill="#000" stroke="#fff"/><rect x="20" y="796" width="10" height="10" fill="#666" stroke="#fff"/>
<rect x="6" y="817" width="9" height="9" fill="#000" stroke="none"/><rect x="9" y="820" width="3" height="3" fill="#666" stroke="none"/>
<rect x="15" y="817" width="10" height="9" fill="url(#g2)" stroke="none"/><rect x="25" y="817" width="9" height="9" fill="#fff" stroke="none"/><path d="M25 826l9-9" stroke="#f00" stroke-width="1.500"/>
<circle cx="19" cy="841" r="3.500" stroke="#c4c4c4"/><rect x="20" y="841" width="5" height="5" fill="#c4c4c4" stroke="none"/>
<path d="M11.500 861.500h9v8h-9zM17 858.500h11v7h-8" stroke="#c4c4c4" stroke-width="1.300"/>
<!-- dialog icons -->
<path d="M950 220v6" stroke="#b4b4b4" stroke-width="2.200"/><path d="M946.500 225h7l-3.500 3.500z" fill="#b4b4b4" stroke="none"/><path d="M943 229h4l3 2 3-2h4v4h-14z" fill="#b4b4b4" stroke="none"/>
<path d="M642 507l3 3.500 5-6.500" stroke="#444" stroke-width="1.800"/>
<g fill="#6f6f6f" stroke="none"><rect x="756" y="500" width="12" height="15" fill="none" stroke="#6f6f6f"/><path d="M760 503h4v3h-4zM758 507h8v7h-8zM780 500h13v15h-13zM805 500h12v15h-12zM829 500h12v15h-12z"/></g>
<g fill="#585858" stroke="none"><path d="M782 502h9v11h-9zM807 502h8v11h-8zM831 502h8v11h-8z"/></g>
<g fill="#6f6f6f" stroke="none"><path d="M783 505h3v4h-3zM788 503h2v9h-2zM807 503h8v6h-8zM810 510h2v2h-2zM832 503h2v9h-2zM836 506h2v3h-2z"/></g>
<g stroke="#b5b5b5" stroke-width="1"><path d="M636.500 628.500h4v4h-4zM643.500 628.500h4v4h-4zM650.500 628.500h4v4h-4zM636.500 635.500h4v4h-4zM650.500 635.500h4v4h-4zM636.500 642.500h4v4h-4zM643.500 642.500h4v4h-4zM650.500 642.500h4v4h-4z"/><path d="M640.500 630.500h3M647.500 630.500h3M640.500 644.500h3M647.500 644.500h3M638.500 632.500v3M638.500 639.500v3M652.500 632.500v3M652.500 639.500v3"/></g>
<rect x="643" y="635" width="5" height="5" fill="#eee" stroke="none"/>
<path d="M897 664l3.500-3 3.500 3M897 673l3.500 3 3.500-3" stroke="#6c6c6c"/>
<rect x="818" y="695" width="6" height="8" rx="3" stroke="#6f6f6f" stroke-width="1.500"/><rect x="818" y="701" width="6" height="8" rx="3" stroke="#6f6f6f" stroke-width="1.500"/>
<g fill="#6c6c6c" stroke="none"><path d="M351 708h2v10h-2zM360 708v10l-6-5zM379 708v10l-6-5zM509 708l6 5-6 5zM528 708l6 5-6 5zM536 708h2v10h-2z"/></g>
<!-- list arrows -->
<path d="M532 329l4-4 4 4M532 433l4 4 4-4" stroke="#a8a8a8"/>
<!-- preview artwork -->
<g fill="#000" stroke="#000"><circle cx="450" cy="567" r="2.500"/><circle cx="453" cy="571" r="2"/><circle cx="458" cy="573" r="2.300" fill="none" stroke-width="1.300"/><circle cx="457" cy="577" r="2.300" fill="none" stroke-width="1.300"/><circle cx="439" cy="583" r="3"/><circle cx="441" cy="590" r="2.500"/><path d="M441 584h17" stroke-width="1.300"/><circle cx="448" cy="584" r="2.300" fill="none" stroke-width="1.300"/><circle cx="452" cy="587" r="2.300" fill="none" stroke-width="1.300"/><circle cx="456" cy="583" r="2.600" fill="none" stroke-width="1.300"/></g>
<!-- scrollbars -->
<path d="M1654 70l4-4 4 4M1654 1016l4 4 4-4" stroke="#8a8a8a" stroke-width="1.500"/>
<path d="M102 1030l3 3 3-3M202 1030l3 3 3-3" stroke="#ddd" stroke-width="1.500"/>
<path d="M1635 1034l3-4-3-3M487 1027l-3 4 3 3" stroke="#999" stroke-width="1.200" fill="none"/>
<g fill="#777" stroke="none"><path d="M122 1027h2v9h-2zM131 1027v9l-6-5zM146 1027v9l-6-5zM223 1027l6 5-6 4zM238 1027l6 5-6 4zM246 1027h2v9h-2z"/></g>
<path d="M464 1026l5 5-5 5z" fill="#ddd" stroke="none"/>
<!-- right panel icons -->
<g stroke="#c4c4c4" stroke-width="1"><path d="M1679.500 148.500h4v4h-4zM1687.500 148.500h4v4h-4zM1694.500 148.500h4v4h-4zM1679.500 155.500h4v4h-4zM1694.500 155.500h4v4h-4zM1679.500 162.500h4v4h-4zM1687.500 162.500h4v4h-4zM1694.500 162.500h4v4h-4z"/><path d="M1683.500 150.500h4M1691.500 150.500h3M1683.500 164.500h4M1691.500 164.500h3M1681.500 152.500v3M1681.500 159.500v3M1696.500 152.500v3M1696.500 159.500v3"/></g>
<rect x="1687" y="155" width="5" height="5" fill="#eee" stroke="none"/>
<path d="M1881 151l12 15M1885 151l-2 3 5 10 3 2 2-3-5-10z" stroke="#c4c4c4" stroke-width="1.300"/>
<path d="M1707 201l6-9v9zM1713 201h3" stroke="#aaa"/>
<path d="M1768 196l3 3 3-3" stroke="#777"/>
<path d="M1817 193v9l4-4.500zM1830 193v9l-4-4.500z" fill="#c4c4c4" stroke="#c4c4c4"/><path d="M1823.500 191v13" stroke="#c4c4c4" stroke-dasharray="1.500 1"/>
<path d="M1848 191h9l-4.500 5zM1848 204h9l-4.500-5z" fill="#c4c4c4" stroke="#c4c4c4"/><path d="M1847 197.500h11" stroke="#c4c4c4" stroke-dasharray="1.500 1"/>
<circle cx="1893" cy="220" r="1.700" fill="#c4c4c4" stroke="none"/><circle cx="1898" cy="220" r="1.700" fill="#c4c4c4" stroke="none"/><circle cx="1903" cy="220" r="1.700" fill="#c4c4c4" stroke="none"/>
<rect x="1679.500" y="267.500" width="17" height="17" fill="#fff" stroke="#2a2a2a"/><path d="M1680 284l16-16" stroke="#f00" stroke-width="1.800"/>
<rect x="1679.500" y="296.500" width="17" height="17" fill="#000" stroke="#ddd"/><rect x="1684" y="301" width="8" height="8" fill="#666" stroke="#fff"/>
<rect x="1680.500" y="326.500" width="15" height="15" fill="#999" stroke="#777"/><path d="M1681 327h5v5h-5zM1691 327h5v5h-5zM1686 332h5v5h-5zM1681 337h5v5h-5zM1691 337h5v5h-5z" fill="#666" stroke="none"/>
<!-- colour panel icons -->
<path d="M1749 283l2-2.500 2 2.500M1749 286l2 2.500 2-2.500" stroke="#b4b4b4"/>
<rect x="1755" y="308" width="9" height="9" fill="#222" stroke="#b8b8b8"/><rect x="1751.500" y="304.500" width="7" height="7" fill="#fff" stroke="#222"/>
<path d="M1772 308h5.500v6M1775 314l2.500 3 2.500-3M1772 308l2-2M1772 308l2 2" stroke="#bdbdbd" stroke-width="1.300"/>
<rect x="1750.500" y="323.500" width="19" height="19" fill="#fff" stroke="#333"/><path d="M1751 342l18-18" stroke="#f00" stroke-width="2"/>
<rect x="1761" y="333" width="18" height="18" fill="#000" stroke="#fff"/><rect x="1765" y="337" width="10" height="10" fill="#666" stroke="#fff"/>
<path d="M1757 370l5-2.500 5 2.500v6l-5 3-5-3zM1757 370l5 3 5-3M1762 373v6" stroke="#a8a8a8"/>
<rect x="1775.500" y="366.500" width="13" height="13" fill="#3a3a3a" stroke="#ddd"/>
<g fill="#c4c4c4" stroke="none"><path d="M1811 326v-4l4.500-3 4.500 3v4zM1811 351v-4l4.500-3 4.500 3v4zM1811 376v-4l4.500-3 4.500 3v4zM1913 401v-4l4-3 2 1.500v5.500z"/></g>
<rect x="1750.500" y="412.500" width="39" height="13" fill="#fff" stroke="#333"/><rect x="1764" y="413" width="12" height="12" fill="#000" stroke="none"/><path d="M1751 425l12-12" stroke="#f00" stroke-width="1.800"/>
<path d="M1853 469h17" stroke="#8a8a8a" stroke-width="4" stroke-dasharray="1 1"/>
</svg>
</body></html>
